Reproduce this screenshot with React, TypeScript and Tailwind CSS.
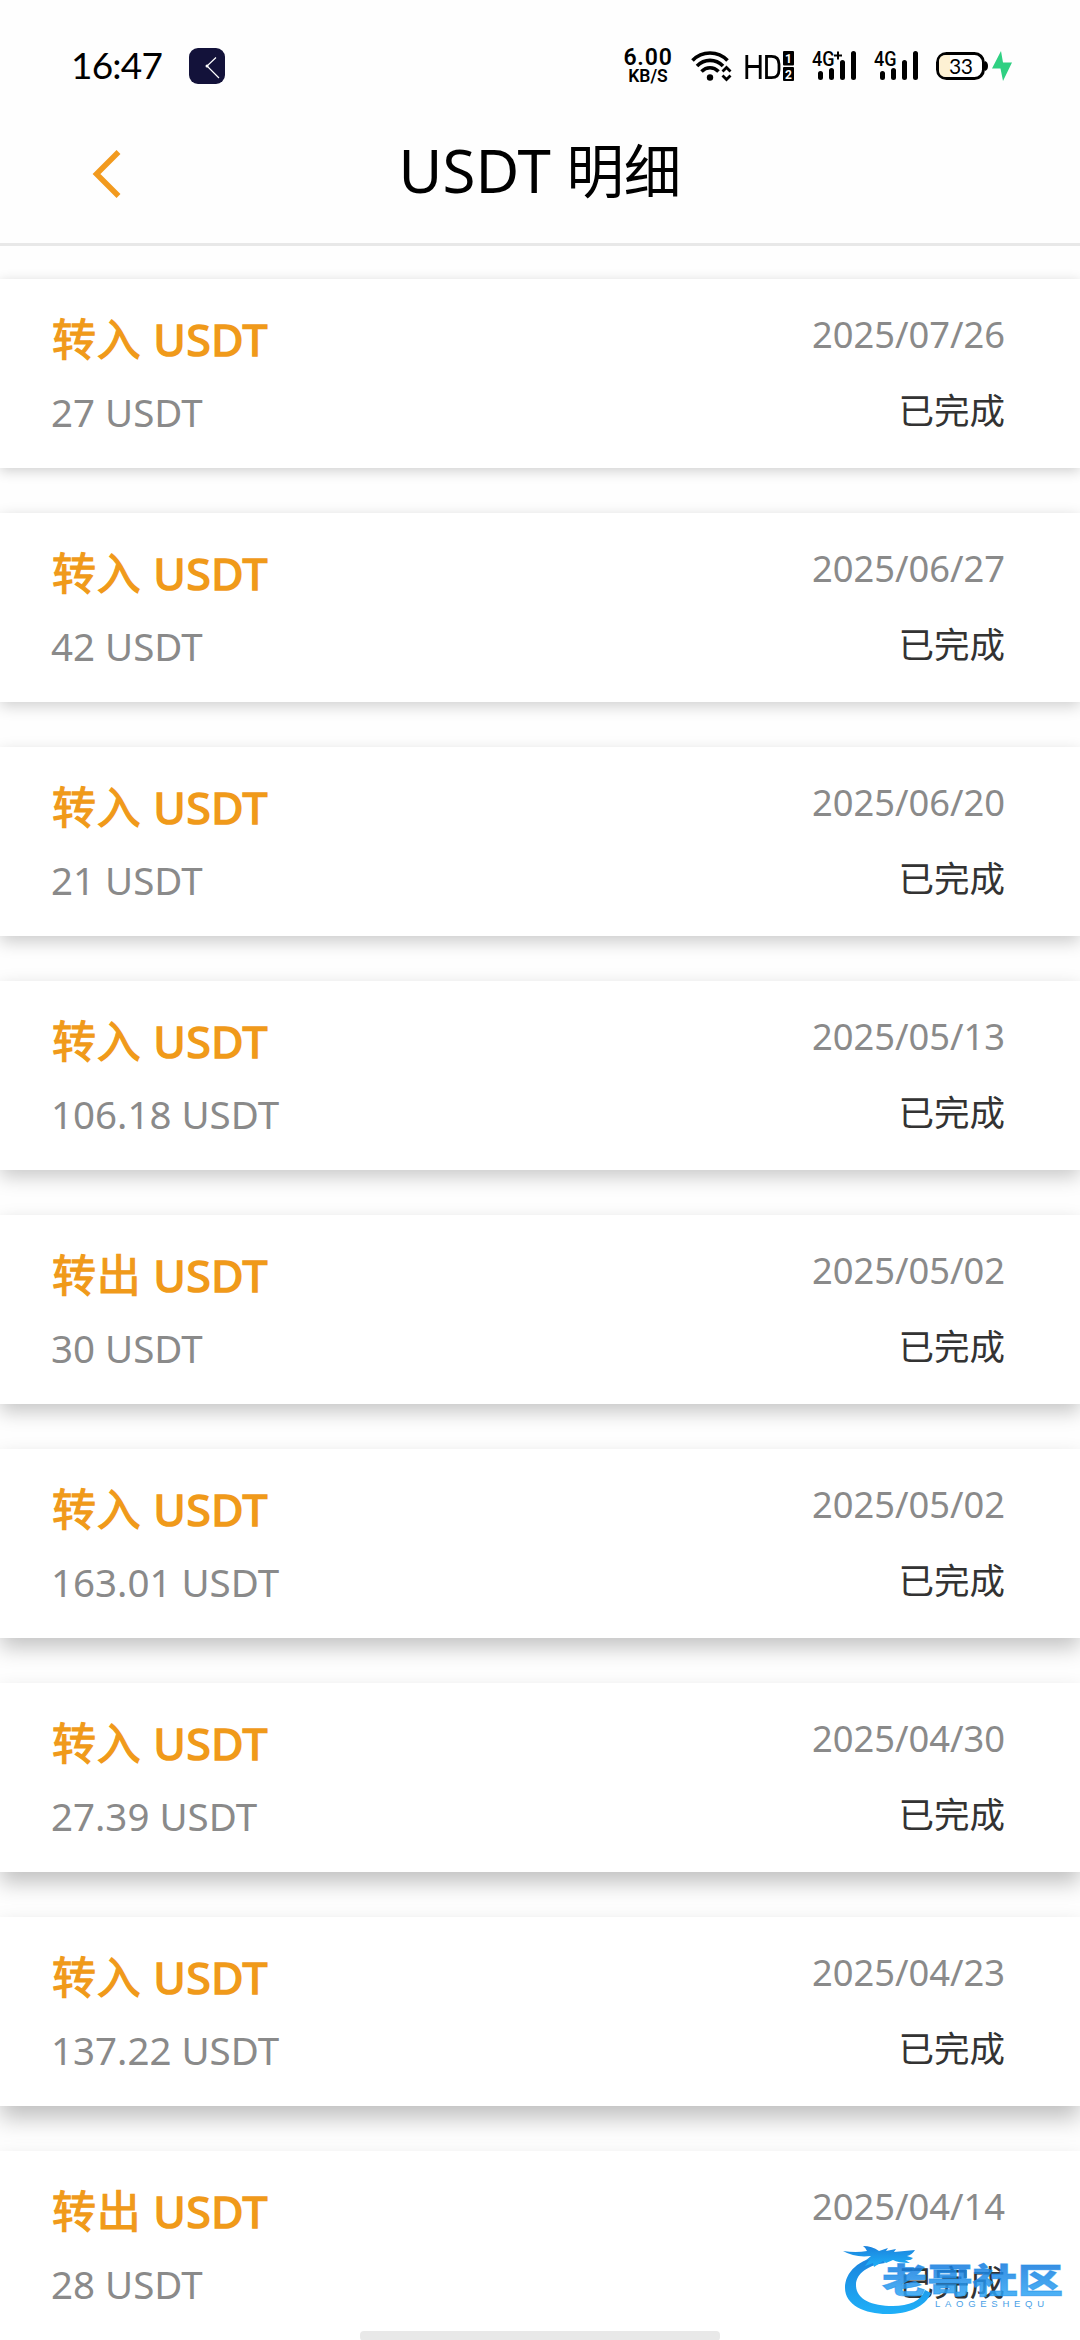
import clsx from "clsx";

type Transfer = {
  type: string;
  amount: string;
  date: string;
  shadow: string;
};

// the drop shadow gets heavier the further down the card sits
const transfers: Transfer[] = [
  { type: "转入", amount: "27", date: "2025/07/26", shadow: "shadow-[0_3px_12px_rgba(0,0,0,0.19)]" },
  { type: "转入", amount: "42", date: "2025/06/27", shadow: "shadow-[0_4px_14px_rgba(0,0,0,0.19)]" },
  { type: "转入", amount: "21", date: "2025/06/20", shadow: "shadow-[0_6px_16px_rgba(0,0,0,0.20)]" },
  { type: "转入", amount: "106.18", date: "2025/05/13", shadow: "shadow-[0_7px_18px_rgba(0,0,0,0.21)]" },
  { type: "转出", amount: "30", date: "2025/05/02", shadow: "shadow-[0_8px_18px_rgba(0,0,0,0.22)]" },
  { type: "转入", amount: "163.01", date: "2025/05/02", shadow: "shadow-[0_10px_20px_rgba(0,0,0,0.23)]" },
  { type: "转入", amount: "27.39", date: "2025/04/30", shadow: "shadow-[0_11px_20px_rgba(0,0,0,0.24)]" },
  { type: "转入", amount: "137.22", date: "2025/04/23", shadow: "shadow-[0_12px_22px_rgba(0,0,0,0.25)]" },
  { type: "转出", amount: "28", date: "2025/04/14", shadow: "shadow-[0_13px_22px_rgba(0,0,0,0.25)]" },
];

function Signal({ plus = false }: { plus?: boolean }) {
  return (
    <div className="relative h-[34px] w-[48px]">
      <span className="absolute left-0 top-[-1px] origin-left scale-x-[0.9] font-[Roboto] text-[20px] font-medium leading-[22px]">4G</span>
      <svg width="48" height="34" viewBox="0 0 48 34">
        {plus && <path d="M22 6.500h8M26 2.500v8" stroke="#000" strokeWidth="2" />}
        <path d="M8.500 24.500v4M19.500 21.500v7M30.500 13.500v15M41.500 4.500v24" stroke="#000" strokeWidth="5" strokeLinecap="round" />
      </svg>
    </div>
  );
}

function StatusBar() {
  return (
    <div className="flex h-[132px] items-center pl-[71px] pr-[68px]">
      <span className="w-[92px] whitespace-nowrap pb-[3px] font-[Lato] text-[37px] leading-none tracking-[-0.8px]">16:47</span>
      <svg className="ml-[26px]" width="36" height="36" viewBox="0 0 36 36">
        <rect width="36" height="36" rx="9" fill="#13123a" />
        <path d="M27 9.500 18 18l12 12" fill="none" stroke="#fff" strokeWidth="1.200" />
        <circle cx="18" cy="18" r="1.500" fill="#fff" />
      </svg>
      <div className="ml-auto flex items-center font-[Roboto]">
        <div className="flex w-[50px] flex-col items-center font-semibold leading-none">
          <span className="text-[23px] leading-[21px] tracking-[0.8px]">6.00</span>
          <span className="text-[17.5px] leading-[17px]">KB/S</span>
        </div>
        <svg className="ml-[18px]" width="42" height="32" viewBox="0 0 42 32">
          <g fill="none" stroke="#000" strokeWidth="3.600">
            <path d="M1.500 10.500C11 .5 27 .5 36.500 10.500" />
            <path d="M6 16C13.500 8.500 24.500 8.500 32 16" />
            <path d="M10.500 21.500C15.500 16.500 22.500 16.500 27.500 21.500" />
          </g>
          <circle cx="19" cy="27.500" r="3.200" />
          <path d="M31.500 21.500 35.500 17.500 39.500 21.500M31.500 25.500 35.500 29.500 39.500 25.500" fill="none" stroke="#000" strokeWidth="2.800" />
        </svg>
        <svg className="ml-[12px]" width="50" height="32" viewBox="0 0 50 32">
          <path d="M1.800 5v24M15.200 5v24M1.800 16.500h13.400M21.500 6.300v21.400h5q7.500 0 7.500-8v-5.400q0-8-7.500-8z" fill="none" stroke="#000" strokeWidth="2.800" />
          <rect x="38" y="1" width="11" height="14.500" rx="1" />
          <rect x="38" y="17" width="11" height="14" rx="1" />
          <text x="43.500" y="12.500" fontSize="12" fontWeight="700" fill="#fff" textAnchor="middle">1</text>
          <text x="43.500" y="28.500" fontSize="12" fontWeight="700" fill="#fff" textAnchor="middle">2</text>
        </svg>
        <div className="ml-[17px]">
          <Signal plus />
        </div>
        <div className="ml-[14px]">
          <Signal />
        </div>
        <svg className="ml-[14px]" width="76" height="32" viewBox="0 0 76 32">
          <rect x="1.500" y="3.500" width="46" height="25" rx="9" fill="#fff" stroke="#000" strokeWidth="3" />
          <path d="M10 5h4v22h-4q-7 0-7-7v-8q0-7 7-7z" fill="#fdf1d3" />
          <path d="M49 11q3 1 3 5t-3 5z" />
          <text x="25" y="23.500" fontSize="21" fontFamily="Lato" fontWeight="400" textAnchor="middle" textLength="24">33</text>
          <path d="M65 1 56 18.500h8.500L67 31l9-18.500H67z" fill="#2fd082" />
        </svg>
      </div>
    </div>
  );
}

function Header() {
  return (
    <header className="flex h-[114px] items-start border-b-3 border-[#e8e8e8] pl-[92px] pr-[121px]">
      <svg className="mt-[17px]" width="29" height="50" viewBox="0 0 29 50">
        <path d="M26.500 3 4.500 25l22 22" fill="none" stroke="#f29a1e" strokeWidth="5.500" />
      </svg>
      <h1 className="flex-1 text-center text-[60px] leading-[76px] text-black">
        USDT <span className="text-[57.5px]">明细</span>
      </h1>
    </header>
  );
}

function TransferCard({ item }: { item: Transfer }) {
  return (
    <div className={clsx("flex h-[189px] shrink-0 justify-between bg-white pl-[51px] pr-[75px]", item.shadow)}>
      <div className="flex flex-col">
        <span className="mt-[28px] pl-px text-[44px] leading-[64px] tracking-[0.7px] text-[#f09a1a] [-webkit-text-stroke:1.7px_#f09a1a]">
          <span className="[-webkit-text-stroke-width:1.2px]">{item.type}</span> USDT
        </span>
        <span className="mt-[14px] text-[38.5px] leading-[54px] text-[#8a8a8a]">{item.amount} USDT</span>
      </div>
      <div className="flex flex-col items-end">
        <span className="mt-[30px] text-[36.3px] leading-[50px] text-[#8a8a8a]">{item.date}</span>
        <span className="mt-[26px] text-[35.5px] leading-[50px] text-[#333]">已完成</span>
      </div>
    </div>
  );
}

function Watermark() {
  return (
    <svg className="absolute left-[841px] top-[2243px]" width="230" height="76" viewBox="0 0 230 76">
      <defs>
        <linearGradient id="wm" x1="0" y1="0" x2="0" y2="1">
          <stop offset="0" stopColor="#1b82dc" />
          <stop offset="1" stopColor="#1fb0f8" />
        </linearGradient>
        <linearGradient id="wmText" x1="0" y1="0" x2="0" y2="1">
          <stop offset="0.2" stopColor="#1478dc" />
          <stop offset="0.9" stopColor="#2fa8f6" />
        </linearGradient>
      </defs>
      <g fill="url(#wm)">
        <path d="M40 13C18 16 4 29 4 45c0 17 20 26 42 26s38-7 44-21l-6-3c-4 11-16 16-32 16-22 0-37-7-37-21 0-12 13-20 29-22z" />
        <path d="M2 8q13 2 24 0-1-3-4-5 9 0 16 5l9-3-2 3 10-2-2 3 21-2q-3 5-8 6l6 2q-2 3-8 2l5 3q-12 0-17-3l-7 3-3-2-9 6-1-4-8 3 5-7-5 2 6-5Q14 15 2 8z" />
      </g>
      <g transform="translate(41 50) scale(1 .88)">
        <text fontSize="39" fontWeight="900" fontFamily="'Noto Sans CJK SC'" textLength="181" lengthAdjust="spacingAndGlyphs" fill="url(#wmText)" fillOpacity="0.85" stroke="#2191ea" strokeOpacity="0.6" strokeWidth="1">老哥社区</text>
      </g>
      <text x="94" y="64" fontSize="9.500" fontFamily="'Liberation Sans'" textLength="109" fill="#4a9fe6">LAOGESHEQU</text>
    </svg>
  );
}

export default function App() {
  return (
    <main className="relative flex h-[2340px] w-[1080px] flex-col overflow-hidden bg-[#fefefe] font-['Noto_Sans','Noto_Sans_CJK_SC',sans-serif] text-black">
      <StatusBar />
      <Header />
      <div className="flex flex-1 flex-col gap-[45px] overflow-hidden pt-[33px]">
        {transfers.map((item, index) => (
          <TransferCard key={index} item={item} />
        ))}
      </div>
      <Watermark />
      {/* gesture bar */}
      <div className="absolute left-[360px] top-[2331px] h-[10px] w-[360px] rounded-[4px] bg-[#e8e8e8]" />
    </main>
  );
}
